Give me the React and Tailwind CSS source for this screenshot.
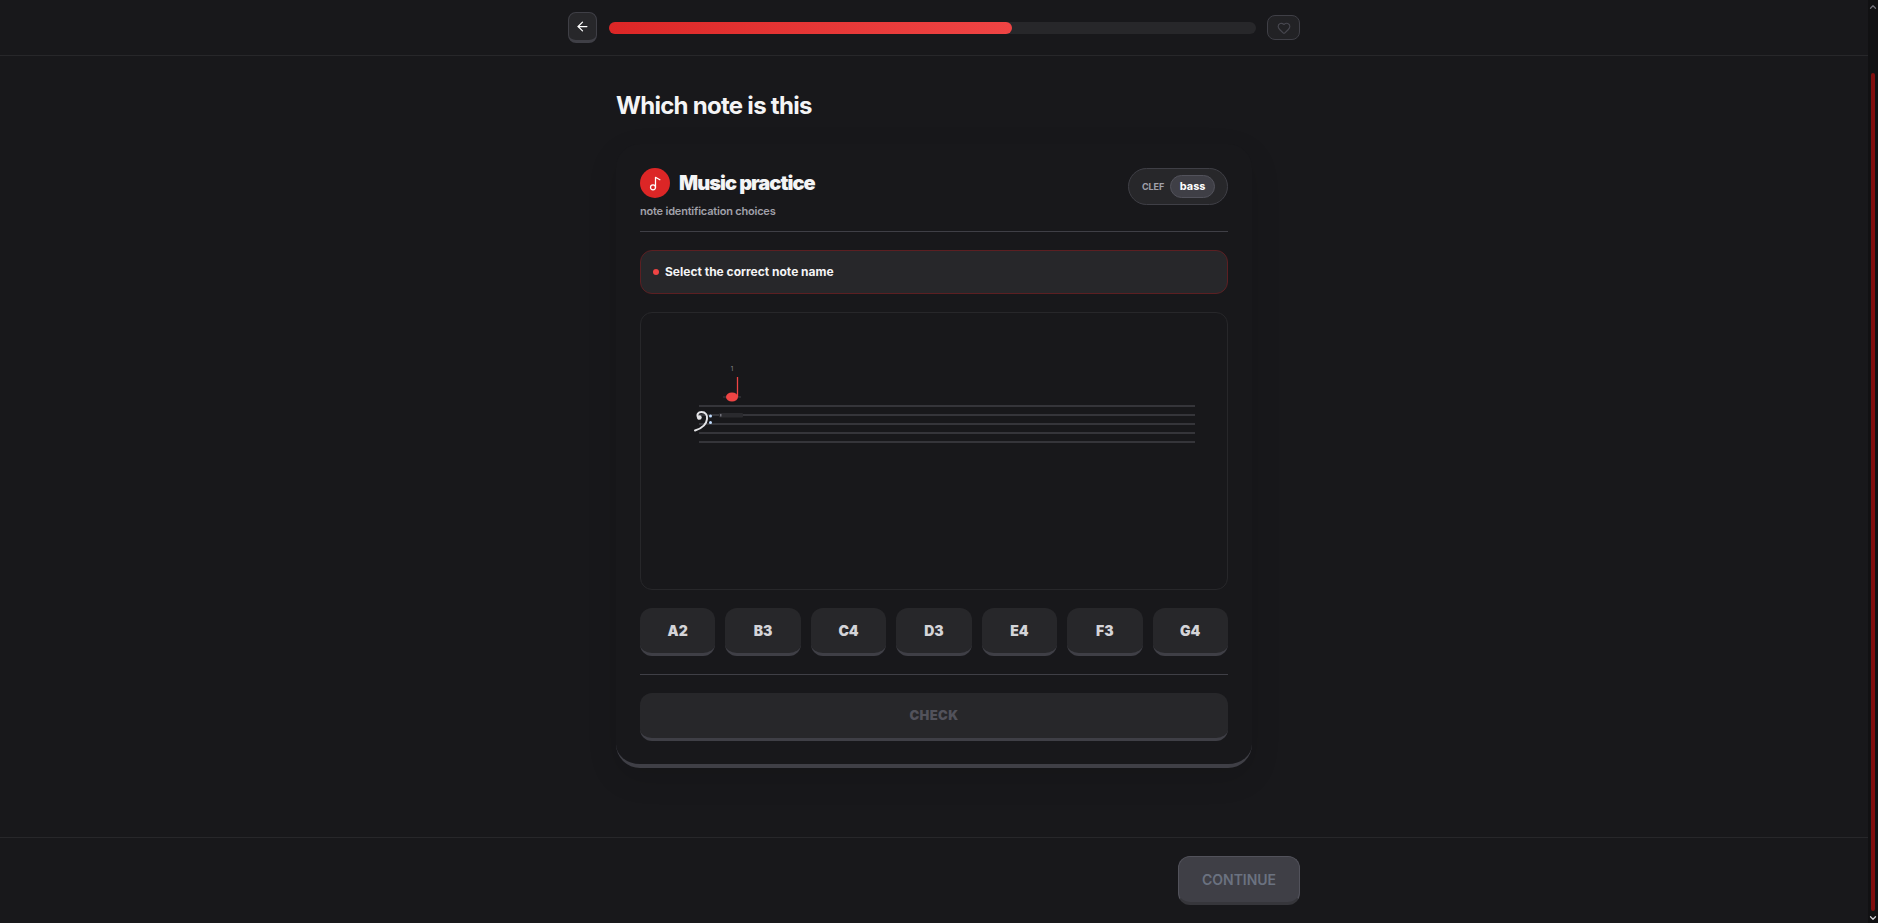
import React from 'react';
import { ArrowLeft, Heart, Music2, ChevronUp, ChevronDown } from 'lucide-react';

const NOTES = ['A2', 'B3', 'C4', 'D3', 'E4', 'F3', 'G4'];
const STAFF_LINES = [93, 102, 111, 120, 129];

const Staff = () => (
  <svg viewBox="0 0 586 276" className="block w-full h-full">
    {STAFF_LINES.map(y => (
      <line key={y} x1="58" x2="554" y1={y} y2={y} stroke="#3f3f46" strokeWidth="1.4" />
    ))}
    {/* bass clef */}
    <path d="M57.5 105.5 C55 101 57.5 99 60.5 99 C64.5 99 66.5 102 66 106 C65.5 111.5 60.5 115.5 54 117.5" fill="none" stroke="#e4e4e7" strokeWidth="2" strokeLinecap="round" />
    <circle cx="58.5" cy="104.5" r="2.2" fill="#e4e4e7" />
    <circle cx="69.5" cy="103" r="1.5" fill="#bfdbfe" />
    <circle cx="69.5" cy="109.5" r="1.5" fill="#bfdbfe" />
    {/* small tag on the staff */}
    <rect x="78" y="100" width="24" height="4.5" rx="1" fill="#2a2a2e" />
    <rect x="79" y="101" width="1.5" height="2.5" fill="#71717a" />
    {/* note */}
    <line x1="82" x2="100" y1="84" y2="84" stroke="#3f3f46" strokeWidth="1" />
    <ellipse cx="91" cy="84" rx="6" ry="4.6" fill="#ef4444" />
    <line x1="96.5" x2="96.5" y1="64" y2="84" stroke="#ef4444" strokeWidth="1.3" />
    <text x="91" y="58" fontSize="6" fill="#8a8a94" textAnchor="middle" fontFamily="Inter, sans-serif">1</text>
  </svg>
);

export default function App() {
  return (
    <div className="flex h-screen overflow-hidden bg-[#18181b] font-['Inter',sans-serif]">
      <div className="flex flex-1 min-w-0 flex-col">
        {/* top bar */}
        <header className="h-[56px] shrink-0 border-b border-[#27272a]">
          <div className="mx-auto flex w-[732px] items-start pt-3">
            <button className="flex h-[31px] w-[29px] items-center justify-center rounded-lg border border-[#3f3f46] border-b-[3px] bg-[#27272a] text-white">
              <ArrowLeft size={15} />
            </button>
            <div className="ml-3 mt-[10px] h-3 w-[647px] rounded-full bg-[#27272a]">
              <div className="h-full w-[403px] rounded-full bg-gradient-to-r from-[#dc2626] to-[#ef4444]" />
            </div>
            <button className="ml-[11px] mt-[3px] flex h-[25px] w-[33px] items-center justify-center rounded-lg border border-[#3f3f46] bg-[#222225] text-[#47474f]">
              <Heart size={14} />
            </button>
          </div>
        </header>

        <main className="flex-1 min-h-0">
          <div className="mx-auto w-[636px] pt-[34px]">
            <h1 className="text-2xl leading-8 font-bold tracking-[-0.72px] text-[#f4f4f5]">Which note is this</h1>

            <div className="mt-[22px] flex flex-col gap-[18px] rounded-3xl border-b-4 border-[#3f3f46] bg-[#18181b] px-6 pt-6 pb-[23px] shadow-[0_10px_30px_rgba(0,0,0,0.12)]">
              <div className="flex items-start justify-between border-b border-[#3f3f46] pb-3">
                <div>
                  <div className="flex h-[30px] items-center gap-[9px]">
                    <div className="flex h-[30px] w-[30px] items-center justify-center rounded-full bg-[#dc2626] text-white">
                      <Music2 size={15} />
                    </div>
                    <span className="text-xl leading-none font-black tracking-[-0.95px] text-[#f4f4f5]">Music practice</span>
                  </div>
                  <p className="mt-[5px] text-[11px] leading-4 font-semibold tracking-[-0.2px] text-[#a1a1aa]">note identification choices</p>
                </div>
                <div className="flex h-[37px] w-[100px] items-center gap-[6px] rounded-full border border-[#3f3f46] bg-[#27272a] pl-[13px]">
                  <span className="text-[9px] font-bold tracking-[-0.1px] text-[#a1a1aa]">CLEF</span>
                  <span className="flex h-[23px] w-[45px] items-center justify-center rounded-full border border-[#52525b] bg-[#3f3f46] text-[11px] font-bold text-white">bass</span>
                </div>
              </div>

              <div className="flex h-[44px] items-center gap-[6px] rounded-xl border border-[#5c1f22] bg-[#27272a] pl-3">
                <span className="h-[6px] w-[6px] rounded-full bg-[#ef4444]" />
                <span className="text-xs font-bold text-[#f4f4f5]">Select the correct note name</span>
              </div>

              <div className="h-[278px] rounded-xl border border-[#27272a]">
                <Staff />
              </div>

              <div className="flex gap-2.5">
                {NOTES.map(n => (
                  <button key={n} className="h-[48px] flex-1 rounded-xl border-b-[3px] border-[#3f3f46] bg-[#27272a] text-sm font-black text-[#d4d4d8]">
                    {n}
                  </button>
                ))}
              </div>

              <div className="h-px bg-[#3f3f46]" />

              <button className="h-[48px] rounded-xl border-b-[3px] border-[#3f3f46] bg-[#27272a] text-[13px] font-black tracking-[0.4px] text-[#52525b]">
                CHECK
              </button>
            </div>
          </div>
        </main>

        {/* bottom bar */}
        <footer className="h-[86px] shrink-0 border-t border-[#27272a]">
          <div className="mx-auto flex w-[732px] justify-end pt-[18px]">
            <button className="h-[49px] w-[122px] rounded-xl border border-[#52525b] border-b-[3px] border-b-[#36363b] bg-[#3f3f46] text-sm font-semibold tracking-[-0.05px] text-[#6b7280]">
              CONTINUE
            </button>
          </div>
        </footer>
      </div>

      {/* scrollbar */}
      <div className="flex w-[10px] shrink-0 flex-col items-center bg-[#111113]">
        <ChevronUp size={10} strokeWidth={3} className="mt-0.5 text-[#71717a]" />
        <div className="mt-[61px] w-[4px] h-[838px] rounded-full bg-[#7f0d0d]" />
        <ChevronDown size={10} strokeWidth={3} className="mt-auto text-[#d4d4d8]" />
      </div>
    </div>
  );
}
